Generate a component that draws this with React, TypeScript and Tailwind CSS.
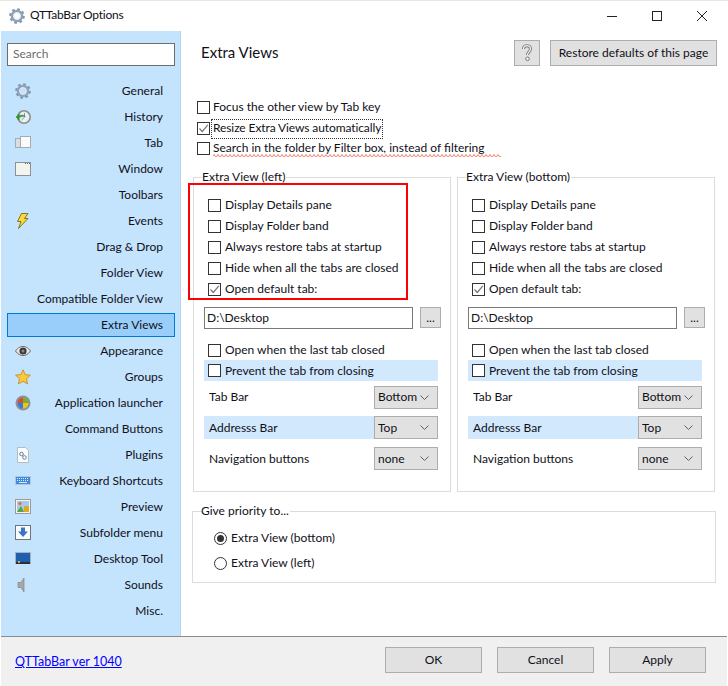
import React from "react";

function Gear({ size = 16 }: { size?: number }) {
  return (
    <svg width={size} height={size} viewBox="0 0 16 16" className="shrink-0">
      <circle cx="8" cy="8" r="6.6" fill="none" stroke="#7f94a8" strokeWidth="2.4" strokeDasharray="2.6 2.58" />
      <circle cx="8" cy="8" r="5" fill="none" stroke="#8ea3b8" strokeWidth="2.6" />
      <circle cx="8" cy="8" r="3.4" fill="none" stroke="#dfe7ee" strokeWidth="0.9" />
    </svg>
  );
}

function History() {
  return (
    <svg width="16" height="16" viewBox="0 0 16 16">
      <circle cx="9" cy="8" r="6.2" fill="#e8f0f6" stroke="#8f8f86" strokeWidth="1.6" />
      <path d="M9.5 4v4.2L6.5 11" fill="none" stroke="#7d8a95" strokeWidth="0.9" />
      <path d="M1 8l3.2-3v1.7c2-.9 4.600-.6 6 .8-2-.4-4-.2-6 1.300V11z" fill="#2f9e2f" stroke="#1d7a1d" strokeWidth="0.5" />
    </svg>
  );
}

function TabIcon() {
  return (
    <svg width="16" height="16" viewBox="0 0 16 16">
      <rect x="0.500" y="3.500" width="5" height="9" fill="#d9dee3" stroke="#a5abb0" />
      <rect x="5.500" y="1.500" width="10" height="11" fill="#fafbfc" stroke="#a5abb0" />
    </svg>
  );
}

function WindowIcon() {
  return (
    <svg width="16" height="16" viewBox="0 0 16 16">
      <rect x="0.500" y="1.500" width="15" height="13" fill="#f3f3f0" stroke="#8c9196" />
      <path d="M10 2.500h5" stroke="#666" strokeDasharray="1 1" />
    </svg>
  );
}

function Bolt() {
  return (
    <svg width="16" height="16" viewBox="0 0 16 16">
      <path d="M6.500 0.500h6.500L9.500 5.500h3.500L3.500 15.500l2.500-7H2.500z" fill="#f7d93a" stroke="#7d6a1a" strokeWidth="0.9" strokeLinejoin="round" />
    </svg>
  );
}

function Eye() {
  return (
    <svg width="16" height="16" viewBox="0 0 16 16">
      <path d="M0.500 8C3 4.500 5.500 3.500 8 3.500S13 4.500 15.500 8C13 11.500 10.500 12.500 8 12.500S3 11.500.5 8z" fill="#e9e9e9" stroke="#6b6b6b" />
      <circle cx="8" cy="8" r="3.600" fill="#3a3a3a" />
      <circle cx="8" cy="8" r="1.500" fill="#888" />
    </svg>
  );
}

function Star() {
  return (
    <svg width="16" height="16" viewBox="0 0 16 16">
      <path d="M8 .8l2.200 4.800 5.200.6-3.900 3.500 1.100 5.200L8 12.300l-4.600 2.600 1.100-5.200L.6 6.200l5.200-.6z" fill="#fcc93a" stroke="#b98a1e" strokeWidth="0.8" strokeLinejoin="round" />
    </svg>
  );
}

function Launcher() {
  return (
    <svg width="16" height="16" viewBox="0 0 16 16">
      <circle cx="8" cy="8" r="7.500" fill="#8d9499" />
      <path d="M8 8V2.500A5.500 5.500 0 0 1 13.500 8z" fill="#6fb52c" />
      <path d="M8 8H2.500A5.500 5.500 0 0 1 8 2.500z" fill="#e0492c" />
      <path d="M8 8h5.500A5.500 5.500 0 0 1 8 13.500z" fill="#f4c21c" />
      <path d="M8 8v5.500A5.500 5.500 0 0 1 2.500 8z" fill="#2f7fd8" />
    </svg>
  );
}

function Plugin() {
  return (
    <svg width="16" height="16" viewBox="0 0 16 16">
      <path d="M2.500.5h8l3 3v12h-11z" fill="#fdfdfd" stroke="#b5bcc2" />
      <circle cx="6.500" cy="7" r="1.800" fill="none" stroke="#5a7ea8" />
      <circle cx="9.500" cy="10.500" r="1.800" fill="none" stroke="#5a7ea8" />
    </svg>
  );
}

function Keyboard() {
  return (
    <svg width="16" height="16" viewBox="0 0 16 16">
      <rect x="0.500" y="3.500" width="15" height="8" fill="#3f8be0" stroke="#b9c6d2" />
      <path d="M2 5.500h12M2 7.500h12" stroke="#d8ebfb" strokeDasharray="1 1" />
      <path d="M4 9.500h8" stroke="#d8ebfb" />
    </svg>
  );
}

function Preview() {
  return (
    <svg width="16" height="16" viewBox="0 0 16 16">
      <rect x="0.500" y="0.500" width="15" height="14" fill="#f3f3ef" stroke="#9b9b9b" />
      <rect x="2" y="2" width="12" height="11" fill="#a8c9e8" />
      <path d="M2 13l4-6 3 6z" fill="#58a53a" />
      <rect x="9" y="7" width="5" height="6" fill="#d9a92e" />
      <circle cx="5" cy="4.500" r="1.500" fill="#e9603a" />
    </svg>
  );
}

function Subfolder() {
  return (
    <svg width="16" height="16" viewBox="0 0 16 16">
      <rect x="0.500" y="0.500" width="15" height="14" fill="#fbfcfd" stroke="#6d7680" />
      <path d="M6 2.500h4v4h3l-5 5.500-5-5.500h3z" fill="#3e74c4" />
    </svg>
  );
}

function Desktop() {
  return (
    <svg width="16" height="16" viewBox="0 0 16 16">
      <rect x="0" y="1" width="16" height="12" fill="#a9b1b8" />
      <rect x="1" y="2" width="14" height="9" fill="#1f5fae" />
      <rect x="1" y="11" width="14" height="2" fill="#2a2f36" />
      <rect x="3" y="10" width="2" height="2" fill="#e2a23a" />
    </svg>
  );
}

function Sound() {
  return (
    <svg width="16" height="16" viewBox="0 0 16 16">
      <path d="M3 5.500h3L9 1v14l-3-4.500H3z" fill="#a8a8a8" stroke="#858585" strokeWidth="0.7" />
    </svg>
  );
}

const items: [string, React.ReactNode][] = [
  ["General", <Gear />],
  ["History", <History />],
  ["Tab", <TabIcon />],
  ["Window", <WindowIcon />],
  ["Toolbars", null],
  ["Events", <Bolt />],
  ["Drag & Drop", null],
  ["Folder View", null],
  ["Compatible Folder View", null],
  ["Extra Views", null],
  ["Appearance", <Eye />],
  ["Groups", <Star />],
  ["Application launcher", <Launcher />],
  ["Command Buttons", null],
  ["Plugins", <Plugin />],
  ["Keyboard Shortcuts", <Keyboard />],
  ["Preview", <Preview />],
  ["Subfolder menu", <Subfolder />],
  ["Desktop Tool", <Desktop />],
  ["Sounds", <Sound />],
  ["Misc.", null],
];

function Box({ checked }: { checked?: boolean }) {
  return (
    <span className="w-[13px] h-[13px] border border-[#333333] bg-white flex items-center justify-center shrink-0">
      {checked && (
        <svg width="11" height="11" viewBox="0 0 11 11">
          <path d="M1.500 5.500l2.800 3L9.800 1.800" fill="none" stroke="#777777" strokeWidth="1.200" />
        </svg>
      )}
    </span>
  );
}

function Check({ label, checked, className = "gap-[4px]", flat }: { label: string; checked?: boolean; className?: string; flat?: boolean }) {
  return (
    <div className={"h-[21px] flex items-center " + className}>
      <Box checked={checked} />
      <span className={flat ? "" : "pb-[2px]"}>{label}</span>
    </div>
  );
}

function Select({ value, raised }: { value: string; raised?: boolean }) {
  return (
    <div className="w-[64px] h-[23px] bg-[#e1e1e1] border border-[#adadad] flex items-center justify-between pl-[3px] pr-[8px] shrink-0">
      <span className={raised ? "pb-[2px]" : ""}>{value}</span>
      <svg width="9" height="6" viewBox="0 0 9 6">
        <path d="M.5.5l4 4 4-4" fill="none" stroke="#606060" />
      </svg>
    </div>
  );
}

function Group({ title }: { title: string }) {
  return (
    <fieldset className="w-[258px] h-[323px] border border-[#dcdcdc]">
      <legend className="ml-[8px] h-[16px] leading-[16px] px-0 pr-[1px]">{title}</legend>
      <div className="pt-[10px] pl-[14px]">
        <Check label="Display Details pane" />
        <Check label="Display Folder band" />
        <Check label="Always restore tabs at startup" />
        <Check label="Hide when all the tabs are closed" />
        <Check label="Open default tab:" checked />
      </div>
      <div className="ml-[10px] mt-[7px] w-[237px] flex justify-between">
        <div className="w-[209px] h-[22px] border border-[#7a7a7a] flex items-center pl-[2px]">D:\Desktop</div>
        <div className="w-[21px] h-[21px] bg-[#e1e1e1] border border-[#adadad] flex items-center justify-center">...</div>
      </div>
      <Check label="Open when the last tab closed" className="gap-[4px] ml-[14px] mt-[11px]" />
      <div className="ml-[10px] w-[234px] h-[21px] -mt-[1px] bg-[#d1e8fd] pl-[4px]">
        <Check label="Prevent the tab from closing" flat />
      </div>
      <div className="ml-[10px] w-[234px] mt-[5px] flex items-center justify-between pl-[5px]">
        <span className="pb-[2px]">Tab Bar</span>
        <Select value="Bottom" raised />
      </div>
      <div className="ml-[10px] w-[234px] mt-[7px] flex items-center justify-between pl-[5px] bg-[#d1e8fd]">
        <span>Addresss Bar</span>
        <Select value="Top" />
      </div>
      <div className="ml-[10px] w-[234px] mt-[8px] flex items-center justify-between pl-[5px]">
        <span>Navigation buttons</span>
        <Select value="none" />
      </div>
    </fieldset>
  );
}

function Radio({ label, checked }: { label: string; checked?: boolean }) {
  return (
    <div className="h-[25px] flex items-center gap-[4px] ml-[21px]">
      <span className="w-[13px] h-[13px] rounded-full border border-[#333333] bg-white flex items-center justify-center">
        {checked && <span className="w-[7px] h-[7px] rounded-full bg-[#333333]" />}
      </span>
      <span className="pb-[2px]">{label}</span>
    </div>
  );
}

function Btn({ label }: { label: string }) {
  return (
    <div className="w-[97px] h-[26px] bg-[#e1e1e1] border border-[#adadad] flex items-center justify-center">{label}</div>
  );
}

export default function App() {
  return (
    <div
      className="w-[728px] h-[686px] bg-white flex flex-col overflow-hidden text-[12px] leading-[16px] text-[#101018] relative"
      style={{ fontFamily: "Lato, sans-serif" }}
    >
      <div className="h-[31px] flex items-center pl-[9px] shrink-0 border-t border-[#e6e6e6]">
        <Gear />
        <span className="ml-[5px] tracking-[-0.25px] pb-[2px]">QTTabBar Options</span>
        <div className="ml-auto flex items-center gap-[29px] pr-[18px]">
          <svg width="16" height="16" viewBox="0 0 16 16"><path d="M3 8.500h10" stroke="#222" /></svg>
          <svg width="16" height="16" viewBox="0 0 16 16"><rect x="3.500" y="3.500" width="9" height="9" fill="none" stroke="#222" /></svg>
          <svg width="16" height="16" viewBox="0 0 16 16"><path d="M3 3l10 10M13 3L3 13" stroke="#222" /></svg>
        </div>
      </div>
      <div className="flex flex-1 min-h-0">
        <aside className="w-[180px] ml-[1px] bg-[#c4e3fd] border-r border-[#b5d5ee] shrink-0 pl-[6px] pr-[5px] pt-[12px]">
          <div className="h-[23px] bg-white border border-[#6d6d6d] flex items-center pl-[5px] pb-[2px] text-[#6d6d6d]">Search</div>
          <div className="mt-[13px] flex flex-col">
            {items.map(([name, icon]) => (
              <div
                key={name}
                className={
                  "h-[24px] mb-[2px] flex items-center pr-[11px] pl-[7px] border " +
                  (name === "Extra Views" ? "bg-[#99cefb] border-[#0078d7]" : "border-transparent")
                }
              >
                <span className="w-[16px] h-[16px] block">{icon}</span>
                <span className="ml-auto">{name}</span>
              </div>
            ))}
          </div>
        </aside>
        <main className="flex-1 relative">
          <div className="mt-[9px] h-[26px] flex items-center pr-[11px]">
            <h1 className="ml-[20px] text-[15px] flex-1 pb-[3px]">Extra Views</h1>
            <div className="w-[26px] h-[26px] bg-[#e1e1e1] border border-[#adadad] flex items-center justify-center mr-[10px]">
              <svg width="12" height="18" viewBox="0 0 12 18">
                <path d="M2.500 5c0-4.500 7-4.500 7 0 0 2.500-3 3-3 6" fill="none" stroke="#777777" strokeWidth="3" />
                <path d="M2.500 5c0-4.500 7-4.500 7 0 0 2.500-3 3-3 6" fill="none" stroke="#f4f4f4" strokeWidth="1.200" />
                <circle cx="6.500" cy="14.800" r="1.800" fill="#f4f4f4" stroke="#777777" strokeWidth="1" />
              </svg>
            </div>
            <div className="w-[167px] h-[26px] bg-[#e1e1e1] border border-[#adadad] flex items-center justify-center">Restore defaults of this page</div>
          </div>
          <div className="mt-[31px] ml-[16px]">
            <Check label="Focus the other view by Tab key" className="gap-[3px]" />
            <div className="h-[21px] flex items-center gap-[3px]">
              <Box checked />
              <span className="h-[20px] flex items-center border border-dotted border-[#333333] -ml-[2px] pl-[1px] pr-[1px] pb-[1px] tracking-[-0.1px]">Resize Extra Views automatically</span>
            </div>
            <Check label="Search in the folder by Filter box, instead of filtering" className="gap-[3px] -mt-[1px]" />
          </div>
          <div className="ml-[12px] mt-[10px] flex gap-[6px]">
            <Group title="Extra View (left)" />
            <Group title="Extra View (bottom)" />
          </div>
          <fieldset className="ml-[11px] mt-[11px] w-[524px] h-[80px] border border-[#dcdcdc]">
            <legend className="ml-[8px] h-[16px] leading-[16px] pr-[1px]">Give priority to...</legend>
            <div className="pt-[7px]">
              <Radio label="Extra View (bottom)" checked />
              <Radio label="Extra View (left)" />
            </div>
          </fieldset>
          <svg className="absolute left-[32px] top-[122px]" width="288" height="4" viewBox="0 0 288 4">
            <path
              d={"M0 3" + Array.from({ length: 72 }, () => "q1 -3 2 0t2 0").join("")}
              fill="none"
              stroke="#f08070"
            />
          </svg>
          <div className="absolute left-[7px] top-[152px] w-[220px] h-[117px] border-[2px] border-[#ff0000]" />
        </main>
      </div>
      <footer className="h-[50px] mx-[1px] shrink-0 bg-[#f0f0f0] border-t border-[#8c8c8c] flex items-center pl-[14px] pr-[21px]">
        <a className="text-[#0000ff] underline text-[12.5px] mt-[1px]">QTTabBar ver 1040</a>
        <div className="ml-auto flex gap-[15px] mb-[3px]">
          <Btn label="OK" />
          <Btn label="Cancel" />
          <Btn label="Apply" />
        </div>
      </footer>
    </div>
  );
}
